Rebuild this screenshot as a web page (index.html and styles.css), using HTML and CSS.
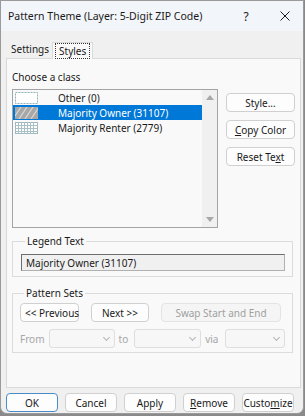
FILE: index.html
```html
<!DOCTYPE html>
<html>
<head>
    <title>Pattern Theme</title>
    <link rel="stylesheet" href="styles.css">
</head>
<body>
    <div class="window">
        <div class="titlebar">
            <span class="title">Pattern Theme (Layer: 5-Digit ZIP Code)</span>
            <span class="help">?</span>
            <span class="close">
                <svg width="10" height="10" viewBox="0 0 10 10"><path d="M0.5 0.5 L9.5 9.5 M9.5 0.5 L0.5 9.5" stroke="#1a1a1a" stroke-width="1"/></svg>
            </span>
        </div>
        <div class="content">
            <div class="tabs">
                <div class="tab">Settings</div>
                <div class="tab active"><span class="focus">Styles</span></div>
            </div>
            <div class="panel">
                <div class="caption">Choose a class</div>
                <div class="class-row">
                    <div class="listbox">
                        <div class="items">
                            <div class="item">
                                <svg class="swatch" width="23" height="12" viewBox="0 0 23 12">
                                    <rect x="0.5" y="0.5" width="22" height="11" fill="#fff" stroke="#8fb3bd" stroke-dasharray="2 1"/>
                                </svg>
                                <span>Other (0)</span>
                            </div>
                            <div class="item selected">
                                <svg class="swatch" width="23" height="12" viewBox="0 0 23 12">
                                    <rect x="0" y="0" width="23" height="12" fill="#a7a7a7"/>
                                    <path d="M-2 12 L6 0 M4 12 L12 0 M10 12 L18 0 M16 12 L24 0" stroke="#d8d8d8" stroke-width="1.2"/>
                                </svg>
                                <span>Majority Owner (31107)</span>
                            </div>
                            <div class="item">
                                <svg class="swatch" width="23" height="12" viewBox="0 0 23 12">
                                    <rect x="0.5" y="0.5" width="22" height="11" fill="#fff" stroke="#9fb8c0"/>
                                    <path d="M3.5 0 V12 M6.5 0 V12 M9.5 0 V12 M12.5 0 V12 M15.5 0 V12 M18.5 0 V12 M0 3.5 H23 M0 6.5 H23 M0 9.5 H23" stroke="#a9c0c7" stroke-width="1"/>
                                </svg>
                                <span>Majority Renter (2779)</span>
                            </div>
                        </div>
                        <div class="scrollbar">
                            <span class="arrow up"></span>
                            <span class="arrow down"></span>
                        </div>
                    </div>
                    <div class="side-buttons">
                        <button class="btn">Style...</button>
                        <button class="btn"><u>C</u>opy Color</button>
                        <button class="btn">Reset Te<u>x</u>t</button>
                    </div>
                </div>
                <fieldset class="group legend-group">
                    <legend>Legend Text</legend>
                    <div class="textbox">Majority Owner (31107)</div>
                </fieldset>
                <fieldset class="group pattern-group">
                    <legend>Pattern Sets</legend>
                    <div class="pattern-row">
                        <button class="btn prev">&lt;&lt; Previous</button>
                        <button class="btn next">Next &gt;&gt;</button>
                        <button class="btn swap" disabled>Swap Start and End</button>
                    </div>
                    <div class="pattern-row combos">
                        <span class="muted">From</span>
                        <div class="combo from"><span class="chev"></span></div>
                        <span class="muted">to</span>
                        <div class="combo to"><span class="chev"></span></div>
                        <span class="muted">via</span>
                        <div class="combo via"><span class="chev"></span></div>
                    </div>
                </fieldset>
            </div>
            <div class="footer">
                <button class="btn default">OK</button>
                <button class="btn">Cancel</button>
                <button class="btn">Apply</button>
                <button class="btn"><u>R</u>emove</button>
                <button class="btn">Custo<u>m</u>ize</button>
            </div>
        </div>
    </div>
</body>
</html>
```

FILE: styles.css
```css
body {
    margin: 0;
    background-color: #8a8a8a;
    font-family: "Noto Sans", "Open Sans", sans-serif;
    font-size: 10px;
    color: #1a1a1a;
}
.window {
    width: 302px;
    height: 412px;
    background-color: #f0f0f0;
    border: 1px solid #9a9a9a;
    border-radius: 0 0 7px 7px;
    overflow: hidden;
}
.titlebar {
    height: 30px;
    display: flex;
    align-items: center;
    background-color: #f2f5f9;
    padding: 0 3px 0 7px;
}
.title {
    flex: 1;
    font-size: 10.5px;
}
.help {
    width: 20px;
    text-align: center;
    font-size: 12px;
    margin-right: 14px;
}
.close {
    width: 30px;
    display: flex;
    justify-content: center;
}
.content {
    padding: 0 2px 0 5px;
}
.tabs {
    display: flex;
    align-items: flex-end;
    height: 27px;
    padding-left: 2px;
}
.tab {
    padding: 0 3px 2px 3px;
    height: 14px;
    line-height: 14px;
}
.tab.active {
    height: 16px;
    line-height: 16px;
    background-color: #f9f9f9;
    border: 1px solid #d9d9d9;
    border-bottom: none;
    padding: 0 2px;
    margin-bottom: -1px;
    position: relative;
}
.focus {
    border: 1px dotted #333;
    padding: 0 3px;
}
.panel {
    height: 328px;
    background-color: #f9f9f9;
    border: 1px solid #d9d9d9;
    padding: 0 5px;
}
.caption {
    margin-top: 11px;
    height: 14px;
    line-height: 14px;
}
.class-row {
    display: flex;
    gap: 8px;
    margin-top: 5px;
}
.listbox {
    width: 204px;
    height: 137px;
    border: 1px solid #a4a4a4;
    display: flex;
    background-color: #f9f9f9;
}
.items {
    flex: 1;
}
.item {
    height: 15px;
    display: flex;
    align-items: center;
    gap: 20px;
    padding-left: 2px;
}
.item.selected {
    background-color: #0078d7;
    color: #fff;
}
.swatch {
    flex: none;
}
.scrollbar {
    width: 15px;
    background-color: #f0f0f0;
    display: flex;
    flex-direction: column;
    justify-content: space-between;
    align-items: center;
    padding: 5px 0;
}
.arrow {
    width: 0;
    height: 0;
    border-left: 4px solid transparent;
    border-right: 4px solid transparent;
}
.arrow.up {
    border-bottom: 5px solid #a8a8a8;
}
.arrow.down {
    border-top: 5px solid #a8a8a8;
}
.side-buttons {
    display: flex;
    flex-direction: column;
    gap: 8px;
    padding-top: 4px;
}
.btn {
    font-family: inherit;
    font-size: 10px;
    color: #1a1a1a;
    background-color: #fdfdfd;
    border: 1px solid #d0d0d0;
    border-radius: 4px;
    height: 19px;
    padding: 0 4px;
    white-space: nowrap;
}
.side-buttons .btn {
    width: 69px;
}
.btn:disabled {
    background-color: #f5f5f5;
    border-color: #e4e4e4;
    color: #a0a0a0;
}
.group {
    border: 1px solid #dcdcdc;
    margin: 0;
    width: 281px;
    box-sizing: border-box;
}
.group legend {
    padding: 0 2px;
    margin-left: 4px;
    line-height: 14px;
}
.legend-group {
    margin-top: 6px;
    padding: 6px 7px 5px 8px;
}
.textbox {
    height: 17px;
    line-height: 16px;
    box-sizing: border-box;
    background-color: #f0f0f0;
    border: 1px solid #b0b0b0;
    border-top-color: #6e6e6e;
    border-left-color: #6e6e6e;
    padding-left: 4px;
}
.pattern-group {
    margin-top: 9px;
    padding: 3px 7px 4px 7px;
}
.pattern-row {
    display: flex;
    align-items: center;
    gap: 12px;
}
.pattern-row .btn {
    height: 19px;
}
.prev {
    width: 59px;
}
.next {
    width: 58px;
}
.swap {
    width: 120px;
}
.combos {
    gap: 4px;
    margin-top: 7px;
}
.muted {
    color: #a6a6a6;
}
.combo {
    height: 19px;
    box-sizing: border-box;
    background-color: #f7f7f7;
    border: 1px solid #dedede;
    border-radius: 3px;
    display: flex;
    align-items: center;
    justify-content: flex-end;
    padding-right: 5px;
}
.combo.from {
    width: 66px;
}
.combo.to {
    width: 67px;
    margin-left: 2px;
}
.combo.via {
    width: 60px;
    margin-left: 3px;
}
.chev {
    width: 4px;
    height: 4px;
    border-right: 1px solid #b5b5b5;
    border-bottom: 1px solid #b5b5b5;
    transform: rotate(45deg);
    margin-top: -3px;
}
.footer {
    display: flex;
    gap: 7px;
    margin-top: 5px;
}
.footer .btn {
    width: 52px;
    padding: 0;
}
.btn.default {
    border-color: #4b8cc8;
}
```
